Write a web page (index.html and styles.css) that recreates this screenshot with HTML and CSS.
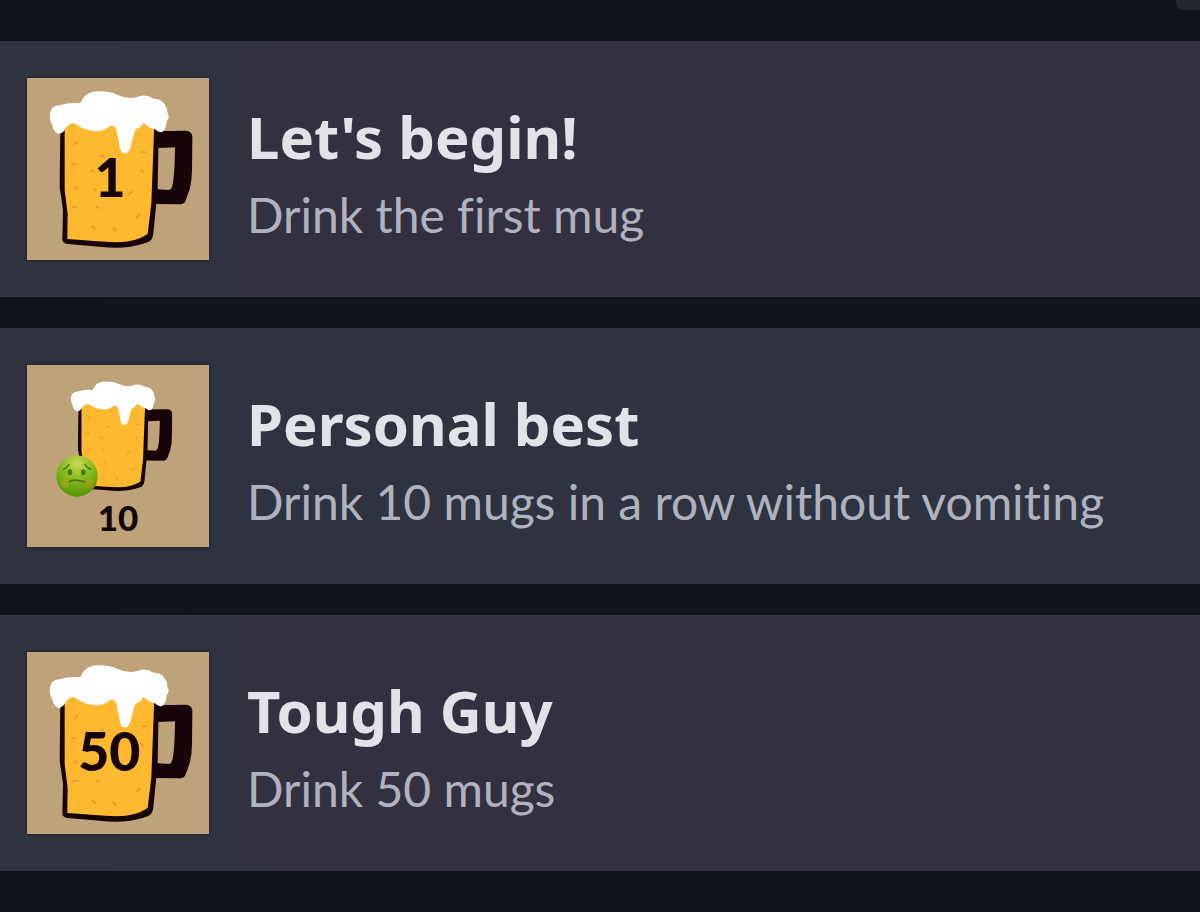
FILE: index.html
```
<!DOCTYPE html>
<html lang="en">
<head>
    <meta charset="UTF-8">
    <meta name="viewport" content="width=device-width, initial-scale=1.0">
    <title>Achievements</title>
    <link rel="stylesheet" href="styles.css">
</head>
<body>
    <!-- Shared mug drawing -->
    <svg class="defs" width="0" height="0" aria-hidden="true">
        <defs>
            <g id="mug">
                <path fill="#170408" d="M462 214 L560 212 Q578 214 578 232 L577 330 Q577 362 570 388 L557 424 Q552 433 542 433 L462 432 Z"/>
                <path fill="#bda27a" d="M476 264 L526 262 Q525 350 518 378 Q516 388 508 390 L474 388 Z"/>
                <path fill="#170408" d="M182 200 L180 380 L190 450 L188 540 Q190 550 204 552 L300 560 Q350 566 392 560 Q430 554 450 544 Q459 537 461 520 L470 430 L476 200 Z"/>
                <path fill="#ffb931" d="M195 190 L195 390 L204 462 L203 537 Q290 544 350 547 Q410 546 444 522 L455 430 L464 190 Z"/>
                <g stroke="#e3a12b" stroke-width="6" stroke-linecap="round">
                    <path d="M224 254l8-9M218 312l8 3M305 286l6 4M428 276l9 1M424 330l8 7M275 332l7 5M226 388l6-7M283 387l4 4M388 403l10-9M220 442l9-2M290 440l7 4M411 473l9-10M278 500l8 6M340 506l8 6"/>
                </g>
                <path fill="#fff" d="M150 168 Q152 136 180 136 Q210 126 242 130 Q256 94 296 94 Q330 94 352 104 Q382 118 410 112 Q436 100 462 116 Q484 116 494 132 Q504 144 503 158 Q512 172 501 184 Q500 202 492 212 Q480 223 466 208 Q446 204 432 188 Q424 204 408 208 Q400 228 393 262 Q386 282 374 280 Q362 278 359 254 Q354 226 350 208 Q340 188 326 202 Q308 216 284 213 Q254 210 238 198 Q218 180 200 202 Q190 222 176 222 Q160 214 158 196 Q150 184 150 168 Z"/>
            </g>
            <radialGradient id="face" cx="50%" cy="20%" r="80%">
                <stop offset="0" stop-color="#c9dc55"/>
                <stop offset="0.5" stop-color="#86b81d"/>
                <stop offset="1" stop-color="#4f9608"/>
            </radialGradient>
        </defs>
    </svg>

    <header class="top-bar">
        <div class="top-tab"></div>
    </header>

    <main class="achievements">
        <section class="achievement warm">
            <svg class="badge" viewBox="82 54 546 546" role="img" aria-label="Mug number 1">
                <use href="#mug"/>
                <text class="badge-number" x="331" y="410">1</text>
            </svg>
            <div class="info">
                <h2>Let's begin!</h2>
                <p>Drink the first mug</p>
            </div>
        </section>

        <section class="achievement">
            <svg class="badge" viewBox="82 54 546 546" role="img" aria-label="Mug with a sick face">
                <use href="#mug" transform="translate(107 38) scale(0.71 0.7)"/>
                <circle cx="232" cy="387" r="62" fill="url(#face)"/>
                <g fill="none" stroke="#447a10" stroke-width="5" stroke-linecap="round">
                    <path d="M192 367q10-4 16-14M272 367q-10-4-16-14"/>
                    <path d="M208 405q10-8 24-5t24 4"/>
                </g>
                <ellipse cx="211" cy="376" rx="7" ry="9" fill="#477a16"/>
                <ellipse cx="251" cy="376" rx="7" ry="9" fill="#477a16"/>
                <circle cx="196" cy="409" r="13" fill="#b3a51f" opacity="0.5"/>
                <circle cx="267" cy="411" r="13" fill="#c98c1e" opacity="0.5"/>
                <text class="badge-number small" x="355" y="552">10</text>
            </svg>
            <div class="info">
                <h2>Personal best</h2>
                <p>Drink 10 mugs in a row without vomiting</p>
            </div>
        </section>

        <section class="achievement warm">
            <svg class="badge" viewBox="82 54 546 546" role="img" aria-label="Mug number 50">
                <use href="#mug"/>
                <text class="badge-number" x="329" y="412">50</text>
            </svg>
            <div class="info">
                <h2>Tough Guy</h2>
                <p>Drink 50 mugs</p>
            </div>
        </section>
    </main>
</body>
</html>
```
FILE: styles.css
```
* {
    box-sizing: border-box;
    margin: 0;
    padding: 0;
}
body {
    background-color: #0f141c;
    font-family: "Noto Sans", sans-serif;
    color: #e1e3e9;
}
.defs {
    display: block;
}
.top-bar {
    display: flex;
    justify-content: flex-end;
    height: 41px;
}
.top-tab {
    width: 24px;
    height: 10px;
    background-color: #23272d;
    border-bottom-left-radius: 8px;
}
.achievements {
    display: flex;
    flex-direction: column;
    gap: 31px;
}
.achievement {
    display: flex;
    align-items: center;
    gap: 38px;
    padding: 37px 27px;
    background-color: #2f333f;
}
.achievement.warm {
    background-image: linear-gradient(to right, #2f343f 100px, #33313f 300px);
}
.badge {
    flex: none;
    width: 182px;
    height: 182px;
    background-color: #bda27a;
    box-shadow: 0 0 3px #1c1a22;
}
.badge-number {
    font-family: Lato, sans-serif;
    font-size: 161px;
    font-weight: 900;
    text-anchor: middle;
    fill: #170408;
}
.badge-number.small {
    font-size: 105px;
}
.info {
    padding-top: 12px;
}
.info h2 {
    font-size: 58px;
    font-weight: bold;
    line-height: 80px;
}
.info p {
    font-family: Lato, sans-serif;
    font-size: 48px;
    line-height: 76px;
    font-variant-ligatures: none;
    color: #b0b3bf;
}
```
